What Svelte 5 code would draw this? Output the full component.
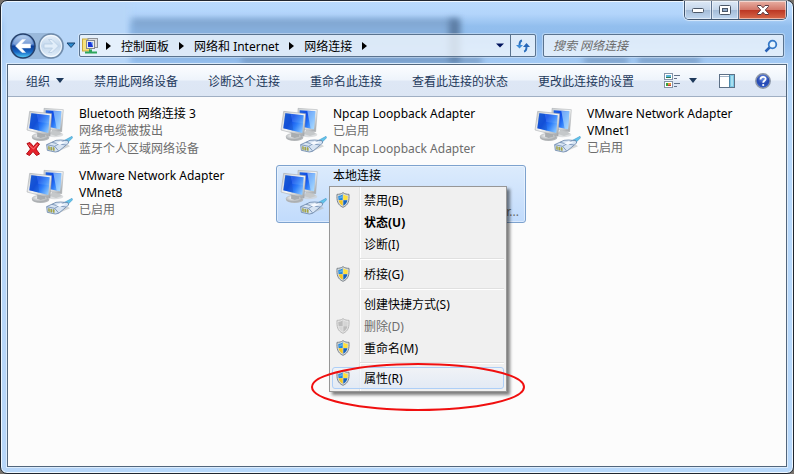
<script>
  let search = '';

  const crumbs = ['控制面板', '网络和 Internet', '网络连接'];

  const commands = [
    '禁用此网络设备',
    '诊断这个连接',
    '重命名此连接',
    '查看此连接的状态',
    '更改此连接的设置'
  ];

  let connections = [
    { name: 'Bluetooth 网络连接 3', details: ['网络电缆被拔出', '蓝牙个人区域网络设备'], unplugged: true },
    { name: 'Npcap Loopback Adapter', details: ['已启用', 'Npcap Loopback Adapter'] },
    { name: 'VMware Network Adapter VMnet1', details: ['已启用'] },
    { name: 'VMware Network Adapter VMnet8', details: ['已启用'] },
    { name: '本地连接', tail: 'r...', details: [], selected: true }
  ];

  const menu = [
    [
      { label: '禁用(B)', shield: true },
      { label: '状态(U)', bold: true },
      { label: '诊断(I)' }
    ],
    [{ label: '桥接(G)', shield: true }],
    [
      { label: '创建快捷方式(S)' },
      { label: '删除(D)', shield: true, disabled: true },
      { label: '重命名(M)', shield: true }
    ],
    [{ label: '属性(R)', shield: true, hot: true }]
  ];
</script>

<svg class="defs" aria-hidden="true">
  <defs>
    <linearGradient id="screen" x1="0" y1="0.2" x2="1" y2="0.8">
      <stop offset="0" stop-color="#1a5ee0" />
      <stop offset="0.35" stop-color="#0f4be6" />
      <stop offset="0.65" stop-color="#2f80fa" />
      <stop offset="1" stop-color="#8cc8ff" />
    </linearGradient>
    <linearGradient id="bezel" x1="0" y1="0" x2="1" y2="1">
      <stop offset="0" stop-color="#c9cdd0" />
      <stop offset="0.5" stop-color="#f4f5f5" />
      <stop offset="1" stop-color="#9a9ea2" />
    </linearGradient>
    <radialGradient id="base" cx="0.45" cy="0.35" r="0.6">
      <stop offset="0" stop-color="#ffffff" />
      <stop offset="1" stop-color="#a9adb0" />
    </radialGradient>
    <linearGradient id="backball" x1="0" y1="0" x2="0" y2="1">
      <stop offset="0" stop-color="#a9c9ee" />
      <stop offset="0.46" stop-color="#4273c2" />
      <stop offset="0.5" stop-color="#0c3b94" />
      <stop offset="0.75" stop-color="#1767c4" />
      <stop offset="1" stop-color="#5ad5fb" />
    </linearGradient>
    <linearGradient id="fwdball" x1="0" y1="0" x2="0" y2="1">
      <stop offset="0" stop-color="#e9f2fb" />
      <stop offset="0.5" stop-color="#c3d7ec" />
      <stop offset="1" stop-color="#e4f0fb" />
    </linearGradient>
    <radialGradient id="helpball" cx="0.5" cy="0.3" r="0.7">
      <stop offset="0" stop-color="#7396e6" />
      <stop offset="0.6" stop-color="#2447b2" />
      <stop offset="1" stop-color="#3d69d0" />
    </radialGradient>
  </defs>
  <symbol id="network" viewBox="15 15 144 144">
    <ellipse cx="104" cy="104" rx="26" ry="8" fill="#cfd2d4" opacity="0.7" />
    <path d="M96 90l22 4 8 8-18 6-18-6z" fill="#c5c8ca" />
    <path d="M72 25l58 4-5 66-54-10z" fill="url(#bezel)" stroke="#a5a9ac" stroke-width="1.5" />
    <path d="M77 31l47 3-4 54-44-9z" fill="url(#screen)" />
    <path d="M100 33l24 1-4 54-10-2z" fill="#b9e2ff" opacity="0.6" />
    <ellipse cx="62" cy="113" rx="26" ry="10" fill="#b5b8ba" />
    <ellipse cx="60" cy="110" rx="24" ry="10" fill="url(#base)" stroke="#a6aaad" stroke-width="1" />
    <path d="M52 96l22 5 2 9-14 4-11-4z" fill="#a9adb0" />
    <path d="M29 34l66 7-5 67-69-18z" fill="url(#bezel)" stroke="#9da1a4" stroke-width="1.5" />
    <path d="M34 40l55 6-4 53-57-14z" fill="url(#screen)" />
    <path d="M34 40l16 2 8 50-30-7z" fill="#1a55c0" opacity="0.4" />
    <path d="M50 42l39 4-2 24-32-4z" fill="#bcdcff" opacity="0.15" />
    <path d="M80 151l30 5 40-17-6-5-46 14z" fill="#b8babb" opacity="0.6" />
    <path d="M128 124l28-15 2 4-18 18z" fill="#62c4ea" stroke="#3c91c4" stroke-width="1.5" />
    <path d="M80 134l28-13 14-1 22 2 2 7-30 25-10 2-24-5z" fill="#d7e4f3" stroke="#6a85a9" stroke-width="2.5" />
    <path d="M80 134l24 5 12 14M104 139l28-17M96 127l20 5M118 132l20 3" fill="none" stroke="#718db2" stroke-width="2.5" />
    <path d="M108 130l14-6 14 2-16 9z" fill="#f7faff" />
    <path d="M85 139l4 1v9l-4-1zM92 141l4 1v9l-4-1zM99 142l4 1v9l-4-1z" fill="#b9b43e" stroke="#77824c" stroke-width="1" />
  </symbol>
  <symbol id="shield" viewBox="0 0 42 48">
    <path d="M21 2c6 4 11 5 18 5 1 18-1 32-18 39C4 39 2 25 3 7c7 0 12-1 18-5z" fill="#d6dbdd" stroke="#7d858b" stroke-width="3" />
    <path d="M20 7v17H8c-1-4-1-8-1-12 5 0 9-2 13-5z" fill="#2187dc" />
    <path d="M22 7v17h12c1-4 1-8 1-12-5 0-9-2-13-5z" fill="#ffe13b" />
    <path d="M20 25v16C12 37 9 31 8 25z" fill="#f5c71d" />
    <path d="M22 25v16c8-4 11-10 12-16z" fill="#1663bd" />
    <path d="M10 14c4 0 7-1 9-3v6l-9 3z" fill="#8cc9f5" opacity="0.6" />
  </symbol>
  <symbol id="shield-off" viewBox="0 0 42 48">
    <path d="M21 2c6 4 11 5 18 5 1 18-1 32-18 39C4 39 2 25 3 7c7 0 12-1 18-5z" fill="#e4e4e4" stroke="#b9b9b9" stroke-width="3" />
    <path d="M20 7v17H8c-1-4-1-8-1-12 5 0 9-2 13-5zM22 25v16c8-4 11-10 12-16z" fill="#bcbcbc" />
    <path d="M22 7v17h12c1-4 1-8 1-12-5 0-9-2-13-5zM20 25v16C12 37 9 31 8 25z" fill="#d5d5d5" />
  </symbol>
</svg>

<div class="window">
  <div class="glass" aria-hidden="true">
    <i class="behind"></i>
    <i class="behind-edge"></i>
    <i class="smudge one"></i>
    <i class="smudge two"></i>
    <i class="smudge three"></i>
  </div>

  <header class="titlebar">
    <div class="captions">
      <button class="caption" aria-label="最小化">
        <svg width="14" height="8" viewBox="0 0 14 8"><rect x="1.5" y="2.5" width="11" height="4" rx="1" fill="#fff" stroke="#4b5767" /></svg>
      </button>
      <button class="caption" aria-label="最大化">
        <svg width="14" height="12" viewBox="0 0 14 12">
          <rect x="1.5" y="1.5" width="11" height="9" rx="1" fill="#fff" stroke="#4b5767" />
          <rect x="4.5" y="4.5" width="5" height="3" fill="#8fa9c8" stroke="#4b5767" />
        </svg>
      </button>
      <button class="caption close" aria-label="关闭">
        <svg width="14" height="12" viewBox="0 0 14 12">
          <path d="M1.5 1.5H5l2 2.300 2-2.300h3.500v1L9.300 6l3.200 3.500v1H9L7 8.200 5 10.500H1.500v-1L4.700 6 1.500 2.500z" fill="#fff" stroke="#5a3a42" />
        </svg>
      </button>
    </div>
  </header>

  <nav class="navbar">
    <div class="travel">
      <button class="ball" aria-label="后退">
        <svg width="26" height="26" viewBox="0 0 26 26">
          <circle cx="13" cy="13" r="12" fill="url(#backball)" stroke="#25406c" stroke-width="1.5" />
          <path d="M3 11C5 0 21 0 23 11 17 14 9 14 3 11z" fill="#fff" opacity="0.25" />
          <path d="M5.500 13l6.500-6.500h3.500L11.500 11H20.500v4h-9l4 4.500H12z" fill="#fff" stroke="#e9f3ff" stroke-width="0.5" />
        </svg>
      </button>
      <button class="ball" aria-label="前进" disabled>
        <svg width="26" height="26" viewBox="0 0 26 26">
          <circle cx="13" cy="13" r="12" fill="url(#fwdball)" stroke="#6f8aa9" stroke-width="1.5" />
          <circle cx="13" cy="13" r="10.5" fill="none" stroke="#fff" opacity="0.7" />
          <path d="M20.500 13L14 6.500h-3.500L14.500 11H6v4h8.500l-4 4.500H14z" fill="#e2eefa" stroke="#b6cbe2" stroke-width="0.8" />
        </svg>
      </button>
    </div>
    <button class="recent" aria-label="最近的页面">
      <svg width="10" height="7" viewBox="0 0 10 7"><path d="M1 1h8L5 5.500z" fill="#2d8bd0" stroke="#17426f" /></svg>
    </button>

    <div class="address">
      <svg class="place" width="16" height="16" viewBox="0 0 16 16" aria-hidden="true">
        <rect x="0.5" y="1" width="7" height="12" fill="#f6e27c" stroke="#c9a93d" />
        <rect x="6" y="0.5" width="9.500" height="9" fill="#dcdde0" stroke="#8e9298" />
        <rect x="4.500" y="2.500" width="8" height="8" fill="#e9eaec" stroke="#85898f" />
        <rect x="6" y="4" width="5" height="5" fill="#1836d8" />
        <path d="M9 4h2v5z" fill="#82aef5" />
        <path d="M7 11.500h3v2h5v2H3v-2h4z" fill="#2ea65c" />
      </svg>
      <svg class="arrow" width="5" height="8" viewBox="0 0 5 8"><path d="M0 0l5 4-5 4z" /></svg>
      {#each crumbs as crumb}
        <a href="#top">{crumb}</a>
        <svg class="arrow" width="5" height="8" viewBox="0 0 5 8"><path d="M0 0l5 4-5 4z" /></svg>
      {/each}
      <button class="history" aria-label="以前的位置">
        <svg width="8" height="5" viewBox="0 0 8 5"><path d="M0 0.500h8L4 4.500z" fill="#00135c" /></svg>
      </button>
      <button class="refresh" aria-label="刷新">
        <svg width="16" height="16" viewBox="0 0 16 16" fill="none" stroke="#2c6fbd" stroke-width="2">
          <path d="M7 2.500C4.500 3 4.500 5 4.500 7.500" />
          <path d="M1 7h7L4.500 10.500z" fill="#3b8bd8" stroke="none" />
          <path d="M9 13.500c2.500-.5 2.500-2.500 2.500-5" />
          <path d="M8 9h7l-3.500-4z" fill="#2766b8" stroke="none" />
        </svg>
      </button>
    </div>

    <label class="search">
      <input type="text" bind:value={search} placeholder="搜索 网络连接" aria-label="搜索 网络连接" />
      <svg width="14" height="14" viewBox="0 0 14 14" fill="none" aria-hidden="true">
        <path d="M6 8L1.500 12.500" stroke="#2a62b5" stroke-width="2.5" />
        <circle cx="8.5" cy="5.5" r="3.8" fill="#e6f4ff" stroke="#3579c8" stroke-width="1.8" />
      </svg>
    </label>
  </nav>

  <main class="client">
    <div class="toolbar">
      <button class="command">
        组织
        <svg width="8" height="5" viewBox="0 0 8 5"><path d="M0 0h8L4 5z" fill="#1e395b" /></svg>
      </button>
      {#each commands as command}
        <button class="command">{command}</button>
      {/each}
      <div class="tools">
        <button aria-label="更改视图">
          <svg width="17" height="17" viewBox="0 0 17 17">
            <rect x="0.5" y="1.5" width="8" height="6" fill="#fff" stroke="#8494a8" />
            <path d="M2 3h5v3H2z" fill="#58b3d8" /><path d="M2 5h5v1H2z" fill="#2d7a4f" />
            <rect x="0.5" y="9.5" width="8" height="6" fill="#fff" stroke="#8494a8" />
            <path d="M2 11h2v3H2z" fill="#38a13b" /><path d="M4 11h3v1.500H4z" fill="#e5a31f" /><path d="M4 12.500h3V14H4z" fill="#c63d33" />
            <path d="M10 3.500h6M10 6.500h3M10 11.500h6M10 14.500h3" stroke="#627289" />
          </svg>
        </button>
        <button class="more" aria-label="更多选项">
          <svg width="8" height="5" viewBox="0 0 8 5"><path d="M0 0h8L4 5z" fill="#1e395b" /></svg>
        </button>
        <button class="pane" aria-label="显示预览窗格">
          <svg width="16" height="14" viewBox="0 0 16 14">
            <rect x="0.5" y="0.5" width="15" height="13" fill="#fff" stroke="#5d7086" />
            <path d="M1 2.500h9" stroke="#a2b3c6" />
            <rect x="10" y="1" width="5" height="12" fill="#7cc7e4" />
            <path d="M10.500 1v12" stroke="#4c87a8" />
            <path d="M12 2h2v10h-2z" fill="#a9dff0" />
          </svg>
        </button>
        <button aria-label="获取帮助">
          <svg width="16" height="16" viewBox="0 0 16 16">
            <circle cx="8" cy="8" r="7.2" fill="url(#helpball)" stroke="#8d97a8" stroke-width="1.5" />
            <path d="M5.500 6.500C5.500 3 10.800 3.200 10.600 6 10.500 7.800 8.200 7.800 8.200 9.800" fill="none" stroke="#fff" stroke-width="1.8" />
            <circle cx="8.2" cy="12" r="1.1" fill="#fff" />
          </svg>
        </button>
      </div>
    </div>

    <ul class="connections">
      {#each connections as c}
        <li class="connection" class:selected={c.selected}>
          <svg class="icon" width="48" height="48" aria-hidden="true">
            <use href="#network" />
            {#if c.unplugged}
              <path d="M2 38.500l3-1 3.500 4 3.500-4 2.500 1.500-3.500 5 3.500 5-3 1.500-3.500-4-3.500 4-3-1.500 4-5z" fill="#e8222b" stroke="#b01019" />
              <path d="M3.500 39.500l5 4.500 4-4.500" fill="none" stroke="#f97a7c" />
            {/if}
          </svg>
          <div class="info">
            <p class="name">{c.name}</p>
            {#each c.details as line}
              <p>{line}</p>
            {/each}
          </div>
          {#if c.tail}
            <span class="tail">{c.tail}</span>
          {/if}

          {#if c.selected}
            <div class="menu" role="menu">
              {#each menu as group, g}
                {#if g > 0}<hr />{/if}
                {#each group as item}
                  <button
                    class="entry"
                    class:bold={item.bold}
                    class:hot={item.hot}
                    role="menuitem"
                    disabled={item.disabled}
                  >
                    <span class="glyph">
                      {#if item.shield}
                        <svg width="14" height="16" aria-hidden="true"><use href={item.disabled ? '#shield-off' : '#shield'} /></svg>
                      {/if}
                    </span>
                    {item.label}
                  </button>
                {/each}
              {/each}
              <svg class="ring" width="214" height="48" viewBox="0 0 214 48" aria-hidden="true">
                <ellipse cx="107" cy="24" rx="106" ry="23" fill="none" stroke="#f00f0f" stroke-width="2" />
              </svg>
            </div>
          {/if}
        </li>
      {/each}
    </ul>
  </main>
</div>

<style>
  :global(body) {
    margin: 0;
    background: #77726c;
    font-family: "Noto Sans", "Noto Sans CJK SC", sans-serif;
    font-size: 12px;
    color: #000;
  }
  button {
    padding: 0;
    border: none;
    background: none;
    font: inherit;
    color: inherit;
  }
  svg {
    display: block;
    flex: none;
  }
  .defs {
    position: absolute;
    width: 0;
    height: 0;
  }
  .window {
    position: relative;
    display: flex;
    flex-direction: column;
    box-sizing: border-box;
    min-height: 100vh;
    padding: 0 6px 6px;
    border: 1px solid #20262f;
    border-radius: 7px;
    background: #b7d8fb;
    box-shadow: inset 0 0 0 1px #eef7ff;
  }

  /* blurred shapes of what lies behind the glass frame */
  .glass {
    position: absolute;
    inset: 1px;
    overflow: hidden;
    border-radius: 6px;
    background: linear-gradient(#b9dafd 0, #b3d5fb 12px, #93bfee 24px, #8dbaec 40px, #a5cbf5 62px, #b7d8fb 90px);
  }
  .glass::before {
    content: '';
    position: absolute;
    top: 0;
    left: 0;
    width: 128px;
    height: 100%;
    background: #b7d6f8;
    filter: blur(3px);
  }
  .glass i {
    position: absolute;
    filter: blur(3px);
  }
  .behind {
    top: 17px;
    left: 130px;
    width: 326px;
    height: 44px;
    background: linear-gradient(#7a9cc4 0, #86aedb 8px, #8db9e9 100%);
  }
  .behind-edge {
    top: 17px;
    left: 447px;
    width: 11px;
    height: 44px;
    background: #5c7da4;
  }
  .smudge {
    top: 56px;
    height: 5px;
    background: #6c8fb8;
  }
  .one {
    left: 240px;
    width: 240px;
  }
  .two {
    left: 582px;
    width: 44px;
  }
  .three {
    left: 636px;
    width: 62px;
  }
  .titlebar {
    position: relative;
    display: flex;
    justify-content: flex-end;
    height: 33px;
  }
  .captions {
    display: flex;
    height: 18px;
    overflow: hidden;
    border: 1px solid #40556f;
    border-top: none;
    border-radius: 0 0 5px 5px;
    box-shadow: 0 0 1px 1px rgba(255, 255, 255, 0.6);
  }
  .caption {
    display: flex;
    align-items: center;
    justify-content: center;
    width: 27px;
    border-right: 1px solid #5d7390;
    background: linear-gradient(#dde9f6 0, #c5d6ea 48%, #a3bbd7 50%, #c0d7f0 100%);
    box-shadow: inset 0 0 0 1px rgba(255, 255, 255, 0.5);
  }
  .caption.close {
    width: 47px;
    border-right: none;
    background: linear-gradient(#e8b0a4 0, #d3786a 48%, #bb3522 50%, #d8694a 100%);
  }
  .navbar {
    position: relative;
    display: flex;
    align-items: center;
    height: 23px;
    padding: 0 3px;
    margin-bottom: 7px;
  }
  .travel {
    display: flex;
    gap: 2px;
    border-radius: 13px;
    background: rgba(120, 150, 185, 0.45);
  }
  .recent {
    margin: 0 3px 0 2px;
  }
  .address,
  .search {
    display: flex;
    align-items: center;
    box-sizing: border-box;
    height: 23px;
    border: 1px solid #5a738f;
    border-radius: 2px;
    background: rgba(240, 246, 253, 0.8);
    box-shadow: 0 0 0 1px rgba(255, 255, 255, 0.35);
  }
  .address {
    flex: 453;
    gap: 10px;
    padding-left: 2px;
    white-space: nowrap;
  }
  .address a {
    color: #000;
    text-decoration: none;
  }
  .place {
    margin-right: -2px;
  }
  .arrow {
    fill: #000;
  }
  .history {
    margin-left: auto;
    margin-right: -4px;
  }
  .refresh {
    display: flex;
    align-items: center;
    justify-content: center;
    width: 25px;
    height: 100%;
    border-left: 1px solid #5a738f;
  }
  .search {
    flex: 225;
    margin-left: 7px;
    padding: 0 5px 0 9px;
  }
  .search input {
    flex: 1;
    min-width: 0;
    padding: 0;
    border: none;
    outline: none;
    background: none;
    font: inherit;
    font-style: italic;
  }
  .search input::placeholder {
    color: #6d6d6d;
    opacity: 1;
  }
  .client {
    position: relative;
    flex: 1;
    display: flex;
    flex-direction: column;
    border: 1px solid #52667c;
    background: #fcfcfc;
    box-shadow: 0 0 0 1px #dcecfc;
  }
  .toolbar {
    display: flex;
    align-items: center;
    gap: 30px;
    box-sizing: border-box;
    height: 32px;
    padding: 0 15px 0 18px;
    border-bottom: 1px solid #a0afc3;
    background: linear-gradient(#fcfdff 0, #eef4fb 48%, #dee7f5 52%, #dce6f4 100%);
    color: #1e395b;
    white-space: nowrap;
  }
  .command {
    display: flex;
    align-items: center;
    gap: 6px;
  }
  .tools {
    display: flex;
    align-items: center;
    margin-left: auto;
  }
  .more {
    margin-left: 8px;
  }
  .pane {
    margin: 0 20px 0 22px;
  }
  .connections {
    display: grid;
    grid-template-columns: repeat(auto-fill, 250px);
    gap: 4px;
    margin: 0;
    padding: 6px 0 6px 14px;
    list-style: none;
  }
  .connection {
    position: relative;
    display: flex;
    gap: 6px;
    box-sizing: border-box;
    min-height: 58px;
    padding: 1px 2px;
    border: 1px solid transparent;
    border-radius: 3px;
  }
  .connection.selected {
    border-color: #7da2ce;
    background: linear-gradient(#dcebfc, #c1dbfc);
    box-shadow: inset 0 0 0 1px rgba(255, 255, 255, 0.4);
  }
  .icon {
    overflow: visible;
  }
  .info {
    flex: 1;
    padding-right: 20px;
  }
  .info p {
    margin: 0;
    line-height: 18px;
    color: #6d6d6d;
  }
  .info .name {
    line-height: 17px;
    color: #000;
  }
  .tail {
    align-self: flex-end;
    padding-right: 4px;
    line-height: 18px;
    color: #6d6d6d;
  }
  .menu {
    position: absolute;
    z-index: 1;
    top: 20px;
    left: 52px;
    box-sizing: border-box;
    width: 178px;
    padding: 2px;
    border: 1px solid #979797;
    background: linear-gradient(90deg, transparent 29px, #e2e3e3 29px, #e2e3e3 30px, #fff 30px, #fff 31px, transparent 31px) #f0f0f0;
    box-shadow: 3px 3px 3px rgba(0, 0, 0, 0.5);
  }
  .menu hr {
    height: 1px;
    margin: 3px 0 3px 28px;
    border: none;
    border-top: 1px solid #e0e0e0;
    background: #fff;
  }
  .entry {
    display: flex;
    align-items: center;
    box-sizing: border-box;
    width: 100%;
    height: 22px;
    border: 1px solid transparent;
    border-radius: 3px;
    text-align: left;
    white-space: nowrap;
  }
  .entry.bold {
    font-weight: bold;
  }
  .entry:disabled {
    color: #6d6d6d;
  }
  .entry.hot {
    border-color: #aecff7;
    background: linear-gradient(rgba(240, 244, 250, 0.6), rgba(224, 233, 246, 0.8));
  }
  .glyph {
    width: 28px;
    padding-left: 3px;
  }
  .ring {
    position: absolute;
    top: 176px;
    left: -19px;
    pointer-events: none;
  }
</style>
